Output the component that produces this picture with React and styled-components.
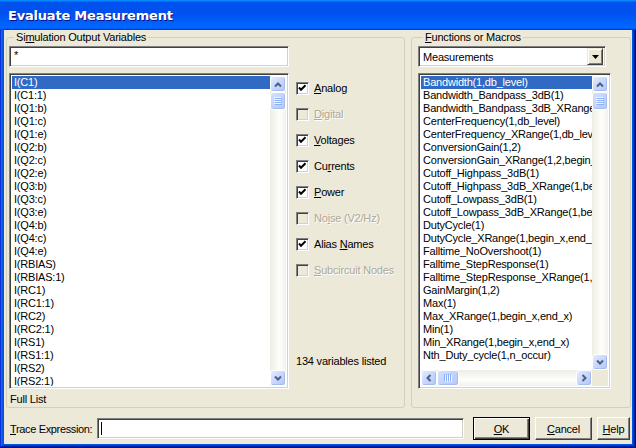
import React from 'react';
import styled, { createGlobalStyle } from 'styled-components';

const Global = createGlobalStyle`
  html, body { margin: 0; padding: 0; background: #ffffff; }
  body {
    width: 636px; height: 448px; overflow: hidden;
    font-family: 'Liberation Sans', Arial, sans-serif; font-size: 11px; color: #000;
    letter-spacing: -0.2px;
  }
  * { box-sizing: border-box; }
`;

const Window = styled.div`
  width: 636px; height: 448px;
  display: flex; flex-direction: column;
`;

const TitleBar = styled.div`
  flex: none; height: 30px;
  display: flex; align-items: center;
  padding: 1px 0 0 8px;
  background: linear-gradient(180deg, #0997ff, #0053ee 8%, #0050ee 40%, #0066ff 88%, #0066ff 93%, #005bff 95%, #003dd7 96%, #003dd7);
  color: #fff;
  font: bold 13px 'DejaVu Sans', Verdana, sans-serif;
  text-shadow: 1px 1px #0f1089;
  letter-spacing: -0.2px;
`;

const FrameShell = styled.div`
  flex: 1; display: flex; flex-direction: column;
  padding: 0 4px 4px 4px;
  background: #0054e3;
  box-shadow: inset -1px -1px #00138c, inset 1px 0 #0831d9, inset -2px -2px #001ea0, inset 2px 0 #166aee, inset -3px -3px #003bda, inset 3px 0 #0855dd;
`;

const Body = styled.div`
  flex: 1; display: flex; flex-direction: column;
  background: #ece9d8;
  padding: 1px 1px 0 2px;
`;

const TopRow = styled.div`
  display: flex; gap: 6px; height: 377px;
`;

const Group = styled.fieldset`
  margin: 0; min-width: 0;
  border: 1px solid #d0d0bf; border-radius: 3px;
  padding: 2px ${p => p.$padRight}px 0 ${p => p.$padLeft}px;
  width: ${p => p.$width ? `${p.$width}px` : 'auto'};
  flex: ${p => p.$width ? 'none' : '1'};
  display: flex; gap: 7px;
`;

const Legend = styled.legend`
  padding: 0 2px; margin-left: 5px;
  font-size: 11px; line-height: 13px; color: #000;
`;

const Column = styled.div`
  display: flex; flex-direction: column;
  width: ${p => p.$width}px; flex: none;
`;

const Sunken = styled.div`
  background: #fff;
  border: 1px solid; border-color: #808080 #ffffff #ffffff #808080;
  box-shadow: inset 1px 1px #404040, inset -1px -1px #d4d0c8;
`;

const FilterField = styled(Sunken)`
  height: 21px; width: ${p => p.$width}px;
  padding: 2px 0 0 4px; line-height: 12px;
`;

const ListBox = styled(Sunken)`
  height: 316px; width: ${p => p.$width}px; margin-top: 6px;
  padding: 2px;
  display: grid;
  grid-template-columns: 1fr 16px;
  grid-template-rows: ${p => p.$hscroll ? '1fr 16px' : '1fr'};
`;

const Items = styled.div`
  overflow: hidden; min-width: 0; min-height: 0;
`;

const Item = styled.div`
  height: 13px; line-height: 13px; padding-left: 2px;
  white-space: nowrap;
  background: ${p => p.$selected ? '#316ac5' : 'transparent'};
  color: ${p => p.$selected ? '#fff' : '#000'};
`;

const VScroll = styled.div`
  display: flex; flex-direction: column; min-height: 0;
  background: linear-gradient(to right, #eeede5, #fefefb 60%, #f3f1ec);
`;

const HScroll = styled.div`
  display: flex; flex-direction: row; min-width: 0;
  background: linear-gradient(to bottom, #eeede5, #fefefb 60%, #f3f1ec);
`;

const Corner = styled.div`
  background: #ece9d8;
`;

const ScrollButton = styled.div`
  flex: none; width: 16px; height: 16px;
  border: 1px solid #fff; border-radius: 3px;
  background: linear-gradient(135deg, #e3ebfe 0%, #c7d7fc 50%, #b4c8f6 100%);
  box-shadow: inset -1px -1px #a6bcf0;
  display: flex; align-items: center; justify-content: center;
`;

const Thumb = styled(ScrollButton)`
  width: ${p => p.$horizontal ? '22px' : '16px'};
  height: ${p => p.$horizontal ? '16px' : '18px'};
  background: linear-gradient(135deg, #d3e0fd 0%, #c2d3fc 50%, #b5c9f7 100%);
`;

const Track = styled.div`
  flex: 1;
`;

const CheckCol = styled.div`
  display: flex; flex-direction: column;
  padding-top: 36px; flex: none; width: 100px;
`;

const CheckRow = styled.div`
  height: 26px; display: flex; align-items: flex-start; gap: 5px;
  white-space: nowrap;
  color: ${p => p.$disabled ? '#aca899' : '#000'};
  text-shadow: ${p => p.$disabled ? '1px 1px #ffffff' : 'none'};
`;

const CheckBox = styled.div`
  width: 13px; height: 13px; flex: none;
  background: ${p => p.$disabled ? '#ece9d8' : '#fff'};
  border: 1px solid; border-color: #808080 #ffffff #ffffff #808080;
  box-shadow: inset 1px 1px #404040, inset -1px -1px #d4d0c8;
  display: flex; align-items: center; justify-content: center;
`;

const CheckLabel = styled.span`
  line-height: 13px;
`;

const Count = styled.div`
  margin-top: auto; margin-bottom: 39px;
  line-height: 13px; white-space: nowrap;
`;

const StatusText = styled.div`
  margin-top: 4px; padding-left: 1px; line-height: 13px;
`;

const Combo = styled(Sunken)`
  height: 21px; width: 188px;
  display: flex; align-items: center; justify-content: space-between;
  padding: 2px 2px 2px 4px;
`;

const ComboButton = styled.div`
  width: 16px; height: 17px;
  background: #ece9d8;
  border: 1px solid; border-color: #ece9d8 #404040 #404040 #ece9d8;
  box-shadow: inset 1px 1px #fff, inset -1px -1px #808080;
  display: flex; align-items: center; justify-content: center;
`;

const BottomRow = styled.div`
  display: flex; align-items: center;
  padding: 9px 0 0 4px;
`;

const TraceLabel = styled.span`
  width: 87px; flex: none; white-space: nowrap; letter-spacing: -0.35px;
`;

const TraceInput = styled(Sunken)`
  width: 367px; height: 21px; flex: none;
  padding: 3px 0 0 3px;
`;

const Caret = styled.div`
  width: 1px; height: 13px; background: #000;
`;

const Buttons = styled.div`
  display: flex; gap: 5px; margin-left: 9px;
`;

const Button = styled.div`
  width: ${p => p.$w}px; height: 23px;
  display: flex; align-items: center; justify-content: center;
  background: #ece9d8;
  border: 1px solid; 
  border-color: ${p => p.$default ? '#000' : '#ffffff #404040 #404040 #ffffff'};
  box-shadow: ${p => p.$default
    ? 'inset 1px 1px #fff, inset -1px -1px #404040, inset -2px -2px #808080'
    : 'inset -1px -1px #808080, inset 1px 1px #ece9d8'};
`;

const Arrow = ({ dir }) => {
  const pts = {
    up: '4,9.5 7,6.5 10,9.5',
    down: '4,5.5 7,8.5 10,5.5',
    left: '8.5,4 5.5,7 8.5,10',
    right: '5.5,4 8.5,7 5.5,10',
  }[dir];
  return (
    <svg width="14" height="14" viewBox="0 0 14 14">
      <polyline points={pts} fill="none" stroke="#4d6185" strokeWidth="2" />
    </svg>
  );
};

const Grip = ({ horizontal }) => (
  <svg width="8" height="8" viewBox="0 0 8 8">
    {[0, 2, 4, 6].map(i => horizontal
      ? <g key={i}><line x1={i + 0.5} y1="0" x2={i + 0.5} y2="7" stroke="#8cb0f8" /><line x1={i + 1.5} y1="1" x2={i + 1.5} y2="8" stroke="#eef4fe" /></g>
      : <g key={i}><line x1="0" y1={i + 0.5} x2="7" y2={i + 0.5} stroke="#eef4fe" /><line x1="1" y1={i + 1.5} x2="8" y2={i + 1.5} stroke="#8cb0f8" /></g>
    )}
  </svg>
);

const Check = () => (
  <svg width="9" height="9" viewBox="0 0 9 9">
    <polyline points="1,3.5 3,5.8 7.5,1.2" fill="none" stroke="#000" strokeWidth="2" />
  </svg>
);

const leftItems = ['I(C1)', 'I(C1:1)', 'I(Q1:b)', 'I(Q1:c)', 'I(Q1:e)', 'I(Q2:b)', 'I(Q2:c)', 'I(Q2:e)', 'I(Q3:b)', 'I(Q3:c)', 'I(Q3:e)', 'I(Q4:b)', 'I(Q4:c)', 'I(Q4:e)', 'I(RBIAS)', 'I(RBIAS:1)', 'I(RC1)', 'I(RC1:1)', 'I(RC2)', 'I(RC2:1)', 'I(RS1)', 'I(RS1:1)', 'I(RS2)', 'I(RS2:1)'];

const rightItems = ['Bandwidth(1,db_level)', 'Bandwidth_Bandpass_3dB(1)', 'Bandwidth_Bandpass_3dB_XRange(1,begin_x,end_x)', 'CenterFrequency(1,db_level)', 'CenterFrequency_XRange(1,db_level,begin_x,end_x)', 'ConversionGain(1,2)', 'ConversionGain_XRange(1,2,begin_x,end_x)', 'Cutoff_Highpass_3dB(1)', 'Cutoff_Highpass_3dB_XRange(1,begin_x,end_x)', 'Cutoff_Lowpass_3dB(1)', 'Cutoff_Lowpass_3dB_XRange(1,begin_x,end_x)', 'DutyCycle(1)', 'DutyCycle_XRange(1,begin_x,end_x)', 'Falltime_NoOvershoot(1)', 'Falltime_StepResponse(1)', 'Falltime_StepResponse_XRange(1,begin_x,end_x)', 'GainMargin(1,2)', 'Max(1)', 'Max_XRange(1,begin_x,end_x)', 'Min(1)', 'Min_XRange(1,begin_x,end_x)', 'Nth_Duty_cycle(1,n_occur)'];

const checks = [
  { a: '', u: 'A', b: 'nalog', on: true },
  { a: '', u: 'D', b: 'igital', off: true },
  { a: '', u: 'V', b: 'oltages', on: true },
  { a: 'Cu', u: 'r', b: 'rents', on: true },
  { a: '', u: 'P', b: 'ower', on: true },
  { a: 'No', u: 'i', b: 'se (V2/Hz)', off: true },
  { a: 'Alias ', u: 'N', b: 'ames', on: true },
  { a: '', u: 'S', b: 'ubcircuit Nodes', off: true },
];

const VerticalBar = () => (
  <VScroll>
    <ScrollButton><Arrow dir="up" /></ScrollButton>
    <Thumb><Grip /></Thumb>
    <Track />
    <ScrollButton><Arrow dir="down" /></ScrollButton>
  </VScroll>
);

export default function App() {
  return (
    <Window>
      <Global />
      <TitleBar>Evaluate Measurement</TitleBar>
      <FrameShell>
        <Body>
          <TopRow>
            <Group $width={399} $padLeft={2} $padRight={0}>
              <Legend>Si<u>m</u>ulation Output Variables</Legend>
              <Column $width={280}>
                <FilterField $width={280}>*</FilterField>
                <ListBox $width={280}>
                  <Items>
                    {leftItems.map((t, i) => <Item key={t} $selected={i === 0}>{t}</Item>)}
                  </Items>
                  <VerticalBar />
                </ListBox>
                <StatusText>Full List</StatusText>
              </Column>
              <CheckCol>
                {checks.map((c, i) => (
                  <CheckRow key={i} $disabled={c.off}>
                    <CheckBox $disabled={c.off}>{c.on && <Check />}</CheckBox>
                    <CheckLabel>{c.a}<u>{c.u}</u>{c.b}</CheckLabel>
                  </CheckRow>
                ))}
                <Count>134 variables listed</Count>
              </CheckCol>
            </Group>
            <Group $padLeft={6} $padRight={0}>
              <Legend><u>F</u>unctions or Macros</Legend>
              <Column $width={193}>
                <Combo>
                  <span>Measurements</span>
                  <ComboButton>
                    <svg width="7" height="4" viewBox="0 0 7 4"><polygon points="0,0 7,0 3.5,4" fill="#000" /></svg>
                  </ComboButton>
                </Combo>
                <ListBox $width={193} $hscroll>
                  <Items>
                    {rightItems.map((t, i) => <Item key={t} $selected={i === 0}>{t}</Item>)}
                  </Items>
                  <VerticalBar />
                  <HScroll>
                    <ScrollButton><Arrow dir="left" /></ScrollButton>
                    <Thumb $horizontal><Grip horizontal /></Thumb>
                    <Track />
                    <ScrollButton><Arrow dir="right" /></ScrollButton>
                  </HScroll>
                  <Corner />
                </ListBox>
              </Column>
            </Group>
          </TopRow>
          <BottomRow>
            <TraceLabel><u>T</u>race Expression:</TraceLabel>
            <TraceInput><Caret /></TraceInput>
            <Buttons>
              <Button $default $w={57}><span><u>O</u>K</span></Button>
              <Button $w={57}><span><u>C</u>ancel</span></Button>
              <Button $w={33}><span><u>H</u>elp</span></Button>
            </Buttons>
          </BottomRow>
        </Body>
      </FrameShell>
    </Window>
  );
}
